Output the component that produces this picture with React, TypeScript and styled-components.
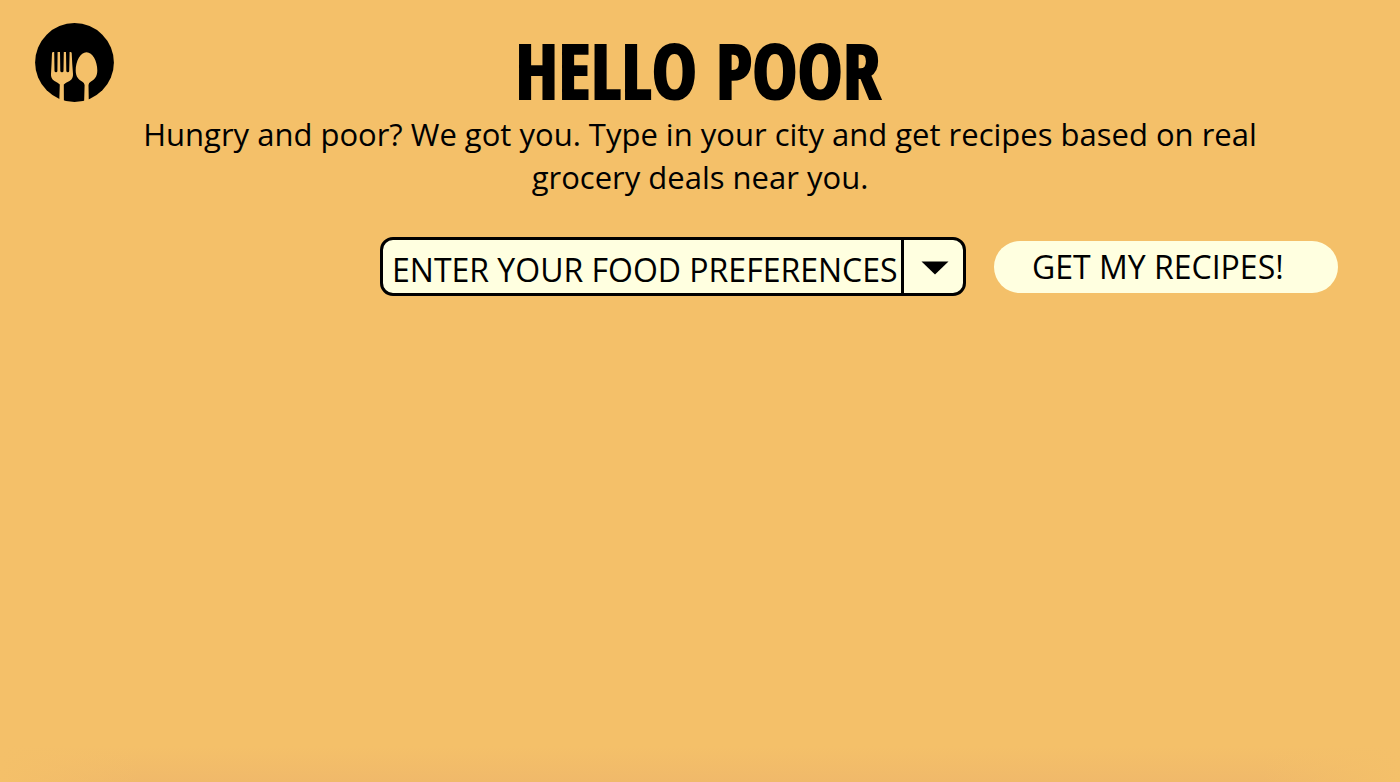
import React from "react";
import styled, { createGlobalStyle } from "styled-components";

const colors = {
  page: "#f4c069",
  shade: "#f0b96a",
  field: "#ffffe0",
  ink: "#000000",
};

const GlobalStyle = createGlobalStyle`
  *, *::before, *::after { box-sizing: border-box; }
  body {
    margin: 0;
    background: ${colors.page};
    color: ${colors.ink};
    font-family: "Open Sans", "Noto Sans", sans-serif;
  }
`;

const Page = styled.div`
  display: flex;
  flex-direction: column;
  min-height: 100vh;
`;

const Header = styled.header`
  display: grid;
  grid-template-columns: 80px 1fr 80px;
  align-items: start;
  padding: 23px 38px 0 34px;
`;

const HomeLink = styled.a`
  display: block;
  height: 80px;
  color: ${colors.ink};
`;

const Title = styled.h1`
  margin: 0;
  font-family: "Open Sans Condensed", "Roboto Condensed", sans-serif;
  font-size: 76px;
  font-weight: 900;
  line-height: 94px;
  text-align: center;
  -webkit-text-stroke: 2px ${colors.ink};
  stroke-linejoin: round;
`;

const Tagline = styled.p`
  max-width: 1160px;
  margin: -4px auto 0;
  font-size: 31px;
  line-height: 43px;
  text-align: center;
`;

const SearchForm = styled.form`
  display: flex;
  flex-wrap: wrap;
  justify-content: flex-end;
  align-items: center;
  gap: 28px;
  padding: 38px 62px 0;
`;

const SelectBox = styled.div`
  display: grid;
  grid-template-columns: 1fr 62px;
  width: 586px;
  height: 59px;
  border: 3px solid ${colors.ink};
  border-radius: 13px;
  background: ${colors.field};
`;

const Select = styled.select`
  grid-area: 1 / 1 / 2 / 3;
  appearance: none;
  min-width: 0;
  border: 0;
  padding: 7px 0 0 9px;
  background: transparent;
  color: ${colors.ink};
  font: inherit;
  font-size: 32px;
  line-height: 44px;
`;

const ArrowCell = styled.span`
  grid-area: 1 / 2 / 2 / 3;
  display: flex;
  align-items: center;
  justify-content: center;
  border-left: 3px solid ${colors.ink};
  padding: 2px 0 0 2px;
  pointer-events: none;
`;

const SubmitButton = styled.button`
  width: 344px;
  height: 52px;
  border: 0;
  border-radius: 26px;
  padding: 0 0 0 38px;
  background: ${colors.field};
  color: ${colors.ink};
  font: inherit;
  font-size: 32px;
  line-height: 52px;
  text-align: left;
  cursor: pointer;
`;

const BottomShade = styled.div`
  height: 36px;
  margin-top: auto;
  background:
    linear-gradient(to right, ${colors.page}, transparent 10%, transparent 90%, ${colors.page}),
    linear-gradient(to bottom, ${colors.page}, ${colors.shade});
`;

function Logo() {
  return (
    <svg width="80" height="80" viewBox="0 0 80 80" aria-hidden="true">
      <circle cx="40.5" cy="39.5" r="39.4" fill="currentColor" />
      <g fill={colors.page}>
        <path d="M18 30 Q18.2 29 19.2 29 H20.2 L20.5 48 Q20.6 49.2 22 49.2 Q23.4 49.2 23.4 48 L23.6 29 H26 L26.3 48 Q26.5 49.2 28 49.2 Q29.5 49.2 29.5 48 L29.8 29 H32 L32.3 48 Q32.5 49.2 33.8 49.2 Q35.1 49.2 35.2 48 L35.6 29 H36.5 Q37.5 29 37.7 30 Q38.2 42 39 51 Q39.4 55.5 35.5 58 Q31.5 59.5 29.8 61.5 L29.9 80 H25.2 L25.8 61.5 Q24 59.5 20.5 58 Q16.6 55.5 17 51 Q17.6 41 18 30 Z" />
        <path d="M52.5 29.2 C58.5 29.2 63.3 38 63.3 47.5 C63.3 54 60 56.8 57 58.4 Q54.6 59.8 54.5 62 L54.8 80 H50.1 L50.6 62 Q50.4 59.8 48 58.4 C45 56.8 41.7 54 41.7 47.5 C41.7 38 46.5 29.2 52.5 29.2 Z" />
      </g>
    </svg>
  );
}

export default function App() {
  return (
    <Page>
      <GlobalStyle />
      <Header>
        <HomeLink href="#" aria-label="Hello Poor home">
          <Logo />
        </HomeLink>
        <Title>HELLO POOR</Title>
      </Header>
      <main>
        <Tagline>
          Hungry and poor? We got you. Type in your city and get recipes based on real grocery deals near you.
        </Tagline>
        <SearchForm onSubmit={(event) => event.preventDefault()}>
          <SelectBox>
            <Select aria-label="Food preferences" defaultValue="">
              <option value="">ENTER YOUR FOOD PREFERENCES</option>
            </Select>
            <ArrowCell>
              <svg width="28" height="14" viewBox="0 0 28 14" aria-hidden="true">
                <path d="M0.5 0.5 H27.5 L14 13.5 Z" fill={colors.ink} />
              </svg>
            </ArrowCell>
          </SelectBox>
          <SubmitButton type="submit">GET MY RECIPES!</SubmitButton>
        </SearchForm>
      </main>
      <BottomShade />
    </Page>
  );
}
